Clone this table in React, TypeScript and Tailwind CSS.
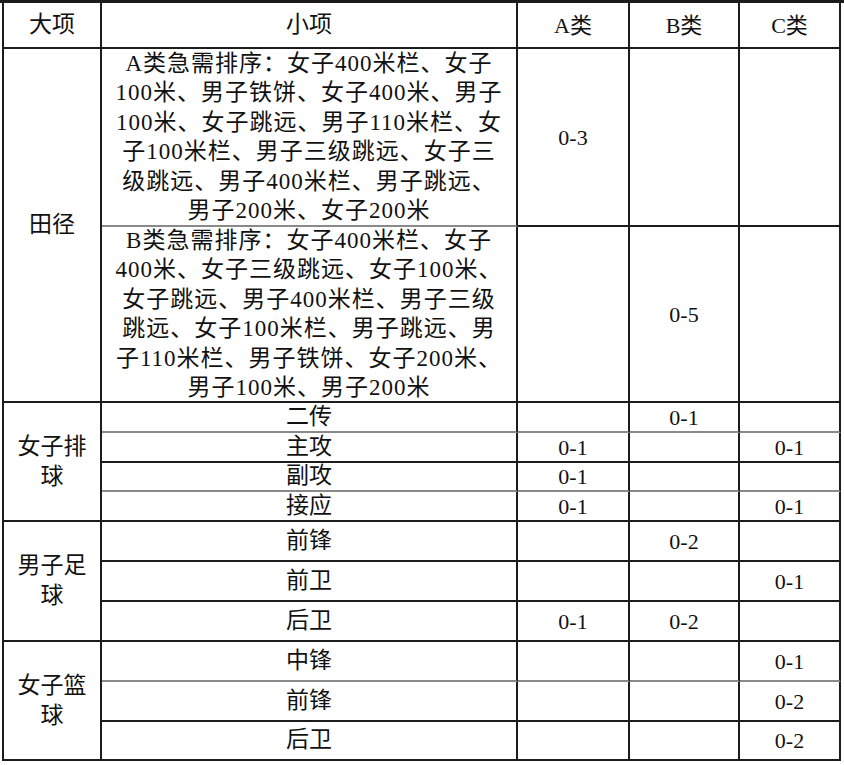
const FONT = '"Liberation Serif", "Noto Sans CJK SC", serif'

const aLines = [
  "A类急需排序：女子400米栏、女子",
  "100米、男子铁饼、女子400米、男子",
  "100米、女子跳远、男子110米栏、女",
  "子100米栏、男子三级跳远、女子三",
  "级跳远、男子400米栏、男子跳远、",
  "男子200米、女子200米",
]

const bLines = [
  "B类急需排序：女子400米栏、女子",
  "400米、女子三级跳远、女子100米、",
  "女子跳远、男子400米栏、男子三级",
  "跳远、女子100米栏、男子跳远、男",
  "子110米栏、男子铁饼、女子200米、",
  "男子100米、男子200米",
]

type CellProps = {
  children?: React.ReactNode
  className?: string
  gray?: boolean
}

function Cell({ children, className = "", gray = false }: CellProps) {
  return (
    <div
      className={`flex items-center justify-center text-center border-r-2 border-r-[#1c1c1c] border-b-2 ${
        gray ? "border-b-[#8a8a8a]" : "border-b-[#1c1c1c]"
      } ${className}`}
    >
      {children}
    </div>
  )
}

function Lines({ lines }: { lines: string[] }) {
  return (
    <div className="flex flex-col items-center leading-[29.5px] tracking-[1px]">
      {lines.map((l, i) => (
        <span key={i} className="whitespace-nowrap">
          {l}
        </span>
      ))}
    </div>
  )
}

export default function App() {
  return (
    <div className="w-[844px] h-[765px] bg-white text-[#111]" style={{ fontFamily: FONT }}>
      <div className="h-[3px] w-full bg-[#1a1a1a]" />
      <div className="ml-[2px] grid w-[839px] border-l-2 border-[#1c1c1c] text-[23px] grid-cols-[98px_416px_112px_110px_101px] grid-rows-[46px_178px_176px_30px_30px_29px_30px_40px_40px_40px_40px_40px_39px]">
        {/* header */}
        <Cell>大项</Cell>
        <Cell>小项</Cell>
        <Cell className="text-[22px]">A类</Cell>
        <Cell className="text-[22px]">B类</Cell>
        <Cell className="text-[22px]">C类</Cell>

        {/* 田径 */}
        <Cell className="row-span-2">田径</Cell>
        <Cell gray>
          <Lines lines={aLines} />
        </Cell>
        <Cell className="text-[22px]">0-3</Cell>
        <Cell />
        <Cell />
        <Cell>
          <Lines lines={bLines} />
        </Cell>
        <Cell />
        <Cell className="text-[22px]">0-5</Cell>
        <Cell />

        {/* 女子排球 */}
        <Cell className="row-span-4 leading-[30px]">
          <div className="flex flex-col items-center">
            <span>女子排</span>
            <span>球</span>
          </div>
        </Cell>
        <Cell gray>二传</Cell>
        <Cell gray />
        <Cell gray className="text-[22px]">0-1</Cell>
        <Cell gray />

        <Cell>主攻</Cell>
        <Cell className="text-[22px]">0-1</Cell>
        <Cell />
        <Cell className="text-[22px]">0-1</Cell>

        <Cell gray>副攻</Cell>
        <Cell gray className="text-[22px]">0-1</Cell>
        <Cell gray />
        <Cell gray />

        <Cell>接应</Cell>
        <Cell className="text-[22px]">0-1</Cell>
        <Cell />
        <Cell className="text-[22px]">0-1</Cell>

        {/* 男子足球 */}
        <Cell className="row-span-3 leading-[30px]">
          <div className="flex flex-col items-center">
            <span>男子足</span>
            <span>球</span>
          </div>
        </Cell>
        <Cell>前锋</Cell>
        <Cell />
        <Cell className="text-[22px]">0-2</Cell>
        <Cell />

        <Cell>前卫</Cell>
        <Cell />
        <Cell />
        <Cell className="text-[22px]">0-1</Cell>

        <Cell>后卫</Cell>
        <Cell className="text-[22px]">0-1</Cell>
        <Cell className="text-[22px]">0-2</Cell>
        <Cell />

        {/* 女子篮球 */}
        <Cell className="row-span-3 leading-[30px]">
          <div className="flex flex-col items-center">
            <span>女子篮</span>
            <span>球</span>
          </div>
        </Cell>
        <Cell gray>中锋</Cell>
        <Cell gray />
        <Cell gray />
        <Cell gray className="text-[22px]">0-1</Cell>

        <Cell>前锋</Cell>
        <Cell />
        <Cell />
        <Cell className="text-[22px]">0-2</Cell>

        <Cell>后卫</Cell>
        <Cell />
        <Cell />
        <Cell className="text-[22px]">0-2</Cell>
      </div>
    </div>
  )
}
